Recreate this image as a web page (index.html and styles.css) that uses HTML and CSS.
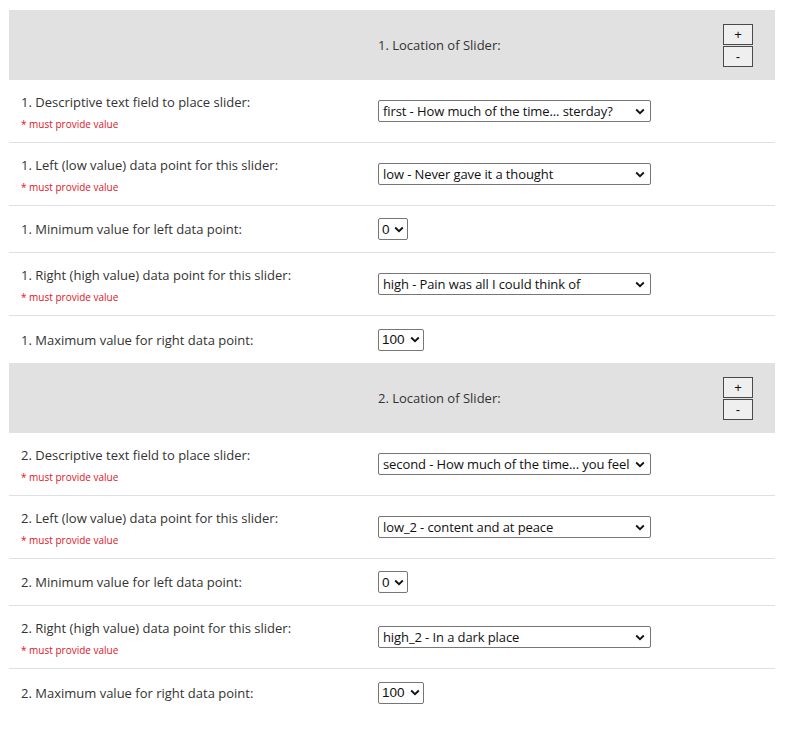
FILE: index.html
```html
<!DOCTYPE html>
<html>
<head>
<meta charset="utf-8">
<link rel="stylesheet" href="styles.css">
</head>
<body>
<div class="form">
  <div class="row head">
    <div class="cell-l"></div>
    <div class="cell-r head-r">
      <span>1. Location of Slider:</span>
      <div class="btns"><button class="btn">+</button><button class="btn">-</button></div>
    </div>
  </div>
  <div class="row tall">
    <div class="cell-l"><div class="lbl">1. Descriptive text field to place slider:</div><div class="req">* must provide value</div></div>
    <div class="cell-r"><select class="sel wide"><option>first - How much of the time... sterday?</option></select></div>
  </div>
  <div class="row tall">
    <div class="cell-l"><div class="lbl">1. Left (low value) data point for this slider:</div><div class="req">* must provide value</div></div>
    <div class="cell-r"><select class="sel wide"><option>low - Never gave it a thought</option></select></div>
  </div>
  <div class="row short">
    <div class="cell-l"><div class="lbl">1. Minimum value for left data point:</div></div>
    <div class="cell-r"><select class="sel num zero"><option>0</option></select></div>
  </div>
  <div class="row tall">
    <div class="cell-l"><div class="lbl">1. Right (high value) data point for this slider:</div><div class="req">* must provide value</div></div>
    <div class="cell-r"><select class="sel wide"><option>high - Pain was all I could think of</option></select></div>
  </div>
  <div class="row short noline">
    <div class="cell-l"><div class="lbl">1. Maximum value for right data point:</div></div>
    <div class="cell-r"><select class="sel num hund"><option>100</option></select></div>
  </div>

  <div class="row head">
    <div class="cell-l"></div>
    <div class="cell-r head-r">
      <span>2. Location of Slider:</span>
      <div class="btns"><button class="btn">+</button><button class="btn">-</button></div>
    </div>
  </div>
  <div class="row tall">
    <div class="cell-l"><div class="lbl">2. Descriptive text field to place slider:</div><div class="req">* must provide value</div></div>
    <div class="cell-r"><select class="sel wide"><option>second - How much of the time... you feel</option></select></div>
  </div>
  <div class="row tall">
    <div class="cell-l"><div class="lbl">2. Left (low value) data point for this slider:</div><div class="req">* must provide value</div></div>
    <div class="cell-r"><select class="sel wide"><option>low_2 - content and at peace</option></select></div>
  </div>
  <div class="row short">
    <div class="cell-l"><div class="lbl">2. Minimum value for left data point:</div></div>
    <div class="cell-r"><select class="sel num zero"><option>0</option></select></div>
  </div>
  <div class="row tall">
    <div class="cell-l"><div class="lbl">2. Right (high value) data point for this slider:</div><div class="req">* must provide value</div></div>
    <div class="cell-r"><select class="sel wide"><option>high_2 - In a dark place</option></select></div>
  </div>
  <div class="row short noline">
    <div class="cell-l"><div class="lbl">2. Maximum value for right data point:</div></div>
    <div class="cell-r"><select class="sel num hund"><option>100</option></select></div>
  </div>
</div>
</body>
</html>
```
FILE: styles.css
```css
html, body {
  margin: 0;
  padding: 0;
  background: #fff;
}
body {
  padding: 10px 11px 20px 9px;
  font-family: "Open Sans", "Noto Sans", sans-serif;
  font-size: 13px;
  color: #333;
}
.form {
  display: flex;
  flex-direction: column;
}
.row {
  display: grid;
  grid-template-columns: 369px 1fr;
  align-items: center;
  box-sizing: border-box;
  border-bottom: 1px solid #dde1e5;
}
.row.noline, .row.head { border-bottom: none; }
.row.head {
  background: #e1e1e1;
  height: 70px;
}
.row.tall { height: 63px; }
.row.short { height: 47px; }
.cell-l {
  padding-left: 12px;
}
.lbl {
  line-height: 20px;
}
.req {
  color: #e0141e;
  font-size: 10px;
  line-height: 14px;
  margin-top: 5px;
}
.head-r {
  display: flex;
  align-items: center;
  justify-content: space-between;
  padding-right: 22px;
}
.btns {
  display: flex;
  flex-direction: column;
  gap: 1px;
}
.btn {
  width: 30px;
  height: 21px;
  box-sizing: border-box;
  margin: 0;
  padding: 0;
  background: #efefef;
  border: 1px solid #4a4a4a;
  border-radius: 0;
  font-family: "Liberation Sans", Arial, sans-serif;
  font-size: 13px;
  color: #111;
}
.sel {
  appearance: none;
  -webkit-appearance: none;
  display: block;
  box-sizing: border-box;
  height: 22px;
  margin: 0;
  padding: 0 14px 0 4px;
  border: 1px solid #767676;
  border-radius: 2px;
  background-color: #fff;
  background-image: url("data:image/svg+xml,%3Csvg xmlns='http://www.w3.org/2000/svg' width='10' height='7' viewBox='0 0 10 7'%3E%3Cpath d='M1.2 1.5 L5 5.2 L8.8 1.5' fill='none' stroke='%23111' stroke-width='1.8'/%3E%3C/svg%3E");
  background-repeat: no-repeat;
  background-position: right 5px center;
  font-family: "Open Sans", "Noto Sans", sans-serif;
  font-size: 13px;
  letter-spacing: -0.1px;
  color: #111;
}
.wide { width: 273px; }
.num {
  font-family: "Liberation Sans", Arial, sans-serif;
  font-size: 13.5px;
  letter-spacing: 0;
  padding: 0 14px 0 3px;
  background-position: right 3px center;
}
.zero { width: 30px; }
.hund { width: 46px; }
```
